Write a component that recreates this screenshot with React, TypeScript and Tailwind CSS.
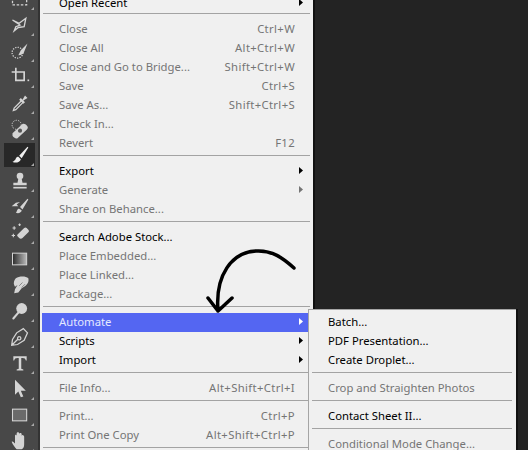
type Item = { label: string; shortcut?: string; off?: boolean; sub?: boolean; active?: boolean };

const sections: Item[][] = [
  [{ label: "Open Recent", sub: true }],
  [
    { label: "Close", shortcut: "Ctrl+W", off: true },
    { label: "Close All", shortcut: "Alt+Ctrl+W", off: true },
    { label: "Close and Go to Bridge...", shortcut: "Shift+Ctrl+W", off: true },
    { label: "Save", shortcut: "Ctrl+S", off: true },
    { label: "Save As...", shortcut: "Shift+Ctrl+S", off: true },
    { label: "Check In...", off: true },
    { label: "Revert", shortcut: "F12", off: true },
  ],
  [
    { label: "Export", sub: true },
    { label: "Generate", sub: true, off: true },
    { label: "Share on Behance...", off: true },
  ],
  [
    { label: "Search Adobe Stock..." },
    { label: "Place Embedded...", off: true },
    { label: "Place Linked...", off: true },
    { label: "Package...", off: true },
  ],
  [
    { label: "Automate", sub: true, active: true },
    { label: "Scripts", sub: true },
    { label: "Import", sub: true },
  ],
  [{ label: "File Info...", shortcut: "Alt+Shift+Ctrl+I", off: true }],
  [
    { label: "Print...", shortcut: "Ctrl+P", off: true },
    { label: "Print One Copy", shortcut: "Alt+Shift+Ctrl+P", off: true },
  ],
];

const subSections: Item[][] = [
  [{ label: "Batch..." }, { label: "PDF Presentation..." }, { label: "Create Droplet..." }],
  [{ label: "Crop and Straighten Photos", off: true }],
  [{ label: "Contact Sheet II..." }],
  [{ label: "Conditional Mode Change...", off: true }],
];

const c = "#d4d4d4";

const tools = [
  // marquee
  <rect x="3" y="5" width="17" height="14" fill="none" stroke={c} strokeWidth="1.5" strokeDasharray="3 2" />,
  // lasso
  <path d="M3 6l8 4 8-6-2 10-7 1-5 4 2-5 5-2-9-6z" fill="none" stroke={c} strokeWidth="1.6" />,
  // quick selection
  <>
    <circle cx="9" cy="14" r="6.500" fill="none" stroke={c} strokeWidth="1.500" strokeDasharray="1.500 1.500" />
    <path d="M21 3l-8 8-3 6c4 0 6-1 7-4z" fill={c} />
  </>,
  // crop
  <>
    <path d="M2 6h15v11M7 1v15h11" fill="none" stroke={c} strokeWidth="2" />
    <rect x="21" y="15" width="2" height="2" fill={c} />
  </>,
  // eyedropper
  <>
    <path d="M14 9L5 18l-1 3 3-1 9-9" fill="none" stroke={c} strokeWidth="1.500" />
    <path d="M13 6l2 2 3-5 3 3-5 3 2 2-2 2-5-5z" fill={c} />
  </>,
  // healing brush
  <>
    <path d="M3 17L15 6c2-1 5 1 6 3 1 1 0 3-1 4L9 23c-2 1-5-1-6-3z" fill={c} />
    <circle cx="12" cy="14" r="2.500" fill="#555" />
    <circle cx="8" cy="7" r="5.500" fill="none" stroke={c} strokeWidth="1.200" strokeDasharray="1.500 1.500" />
  </>,
  // brush
  <path d="M21 2L11 13l3 3L22 3zM10 14c-3 0-3 3-4 4s-2 2-3 2c3 2 9 1 10-3z" fill="#efefef" />,
  // stamp
  <>
    <circle cx="12" cy="6" r="4" fill={c} />
    <path d="M10 9h4l1 5h5v3H4v-3h5z" fill={c} />
    <rect x="4" y="19" width="16" height="2" fill={c} />
  </>,
  // history brush
  <>
    <path d="M21 2l-9 10 3 3 7-12zM11 14c-3 0-2 3-4 5 3 1 7 0 7-3z" fill={c} />
    <path d="M2 11l5-4 5-1-4 3 2 2-5 0z" fill={c} />
  </>,
  // eraser
  <>
    <path d="M10 13l7-7c1-1 2-1 3 0l2 2c1 1 1 2 0 3l-7 7c-1 1-3 1-4 0l-2-2c-1-1 0-2 1-3z" fill={c} />
    <path d="M3 6h4M5 4v4M10 2h3M11.500 .5v3M2 15h4M4 13v4" stroke={c} strokeWidth="1.300" />
  </>,
  // gradient
  <>
    <defs>
      <linearGradient id="grad">
        <stop offset="0" stopColor="#2a2a2a" />
        <stop offset="1" stopColor="#bbb" />
      </linearGradient>
    </defs>
    <rect x="3" y="5" width="17" height="14" fill="url(#grad)" stroke={c} strokeWidth="1.200" />
  </>,
  // smudge
  <>
    <path d="M7 4c4-3 12-3 15 0 1 4-1 8-5 10l-3 2-4 5-5 1 1-5 3-5-3 2-1-2c-1-2 0-6 2-8z" fill={c} />
    <path d="M11 13l4-4M14 15l4-4" stroke="#777" strokeWidth="1" />
  </>,
  // dodge
  <>
    <circle cx="14" cy="9" r="6.500" fill={c} />
    <path d="M10 14L4 21" stroke={c} strokeWidth="2.500" strokeLinecap="round" />
  </>,
  // pen
  <path d="M21 7l-5-5-8 5-5 8-1 7 7-1 8-5zM3 21l6-6M11 11.500a2 2 0 1 0 .1 0" fill="none" stroke={c} strokeWidth="1.500" />,
  // type
  <path d="M4 4h16v5h-1c-.5-2-1.500-3-4-3h-1.500v13l2.500 .8V21H8v-1.200l2.500-.8V6H9C6.500 6 5.500 7 5 9H4z" fill={c} />,
  // path selection
  <path d="M6 1v18l4-4 3 7 3-1-3-7h6z" fill={c} />,
  // rectangle
  <rect x="3" y="5" width="17" height="14" fill="#6a6a6a" stroke={c} strokeWidth="1.300" />,
  // hand
  <path d="M8 22c-2-2-5-6-6-9 1-1 2 0 4 2V6c0-2 2-2 2 0V3c0-2 3-2 3 0v1c0-2 3-2 3 0v2c0-2 3-1 3 1v9c0 3-1 5-3 6z" fill={c} />,
];

function Caret({ color }: { color: string }) {
  return (
    <svg width="4" height="7" viewBox="0 0 4 7" className="absolute right-[5px] top-[5px]">
      <path d="M0 0l4 3.500-4 3.500z" fill={color} />
    </svg>
  );
}

function Row({ item, left }: { item: Item; left: string }) {
  const tone = item.active ? "bg-[#5466f2] text-[#e4e8ff]" : item.off ? "text-[#757575]" : "text-black";
  return (
    <div className={`relative flex h-[19px] items-center justify-between pb-[1px] pr-[13px] ${left} ${tone}`}>
      <span>{item.label}</span>
      {item.shortcut && <span className="tracking-[0.35px]">{item.shortcut}</span>}
      {item.sub && <Caret color={item.active ? "#ffffff" : item.off ? "#757575" : "#000000"} />}
    </div>
  );
}

export default function App() {
  return (
    <div className="relative flex h-[450px] w-[528px] overflow-hidden bg-[#232323] font-['Noto_Sans',sans-serif] text-[11.3px] leading-[18px]">
      <div className="flex w-[40px] shrink-0 flex-col items-center border-r-2 border-[#333] bg-[#484848] pl-[1px]">
        <div className="-mt-[13px] flex flex-col items-center gap-[2px]">
          {tools.map((icon, i) => (
            <div
              key={i}
              className={`relative flex h-[24px] w-[31px] items-center justify-center ${i === 6 ? "bg-[#282828]" : ""}`}
            >
              <svg width="20" height="20" viewBox="0 0 24 24">{icon}</svg>
              <span className="absolute bottom-[1px] right-[1px] h-0 w-0 border-b-[3px] border-l-[3px] border-b-[#aaa] border-l-transparent" />
            </div>
          ))}
        </div>
      </div>

      <div className="-mt-[6px] h-fit w-[275px] shrink-0 border-r-2 border-[#111] bg-[#f0f0f0] pl-[2px] pr-[3px]">
        {sections.map((sec, i) => (
          <div key={i} className="mr-[2px]">
            {sec.map((it) => (
              <Row key={it.label} item={it} left="pl-[17px]" />
            ))}
            <div className={`mb-[6px] ml-[1px] mr-[-2px] h-px bg-[#a3a3a3] ${i === 0 ? "mt-0" : "mt-[2px]"}`} />
          </div>
        ))}
      </div>

      <div className="absolute left-[308px] top-[309px] w-[208px] border-l border-t border-[#a5a5a5] bg-[#f0f0f0] pl-[3px] pr-[4px] pt-[3px] shadow-[2px_0_0_#111]">
        {subSections.map((sec, i) => (
          <div key={i}>
            {sec.map((it) => (
              <Row key={it.label} item={it} left="pl-[16px]" />
            ))}
            <div className="mb-[6px] mt-[2px] h-px bg-[#a3a3a3]" />
          </div>
        ))}
      </div>

      <svg className="absolute left-[200px] top-[240px]" width="100" height="80" viewBox="200 240 100 80" fill="none">
        <path
          d="M294 268C283 258 272 250 256 251C232 252 215 275 218 311M208 298L218 311L232 298"
          stroke="#000"
          strokeWidth="3.500"
          strokeLinecap="round"
          strokeLinejoin="round"
        />
      </svg>
    </div>
  );
}
